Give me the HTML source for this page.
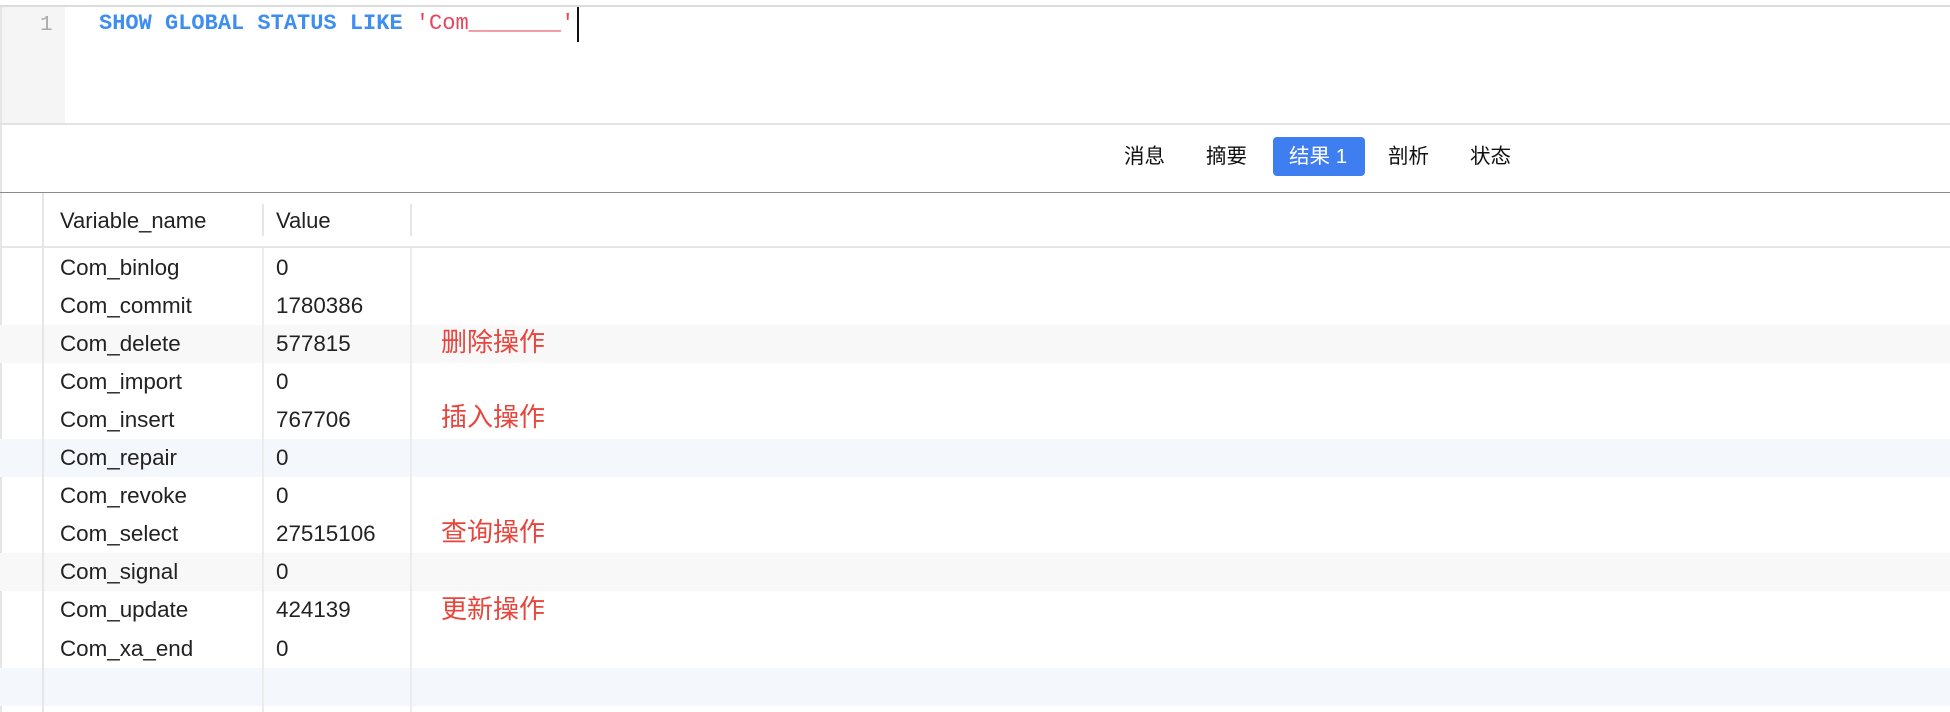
<!DOCTYPE html>
<html><head><meta charset="utf-8"><style>
*{margin:0;padding:0;box-sizing:border-box}
body{width:1950px;height:712px;background:#fff;position:relative;overflow:hidden;font-family:"Liberation Sans","Noto Sans CJK SC",sans-serif;color:#222}
.a{position:absolute}
.row{position:absolute;left:0;width:1950px;height:38px}
.c1,.c2{position:absolute;font-size:22.4px;line-height:38px;top:0;color:#222}
.c1{left:60px}.c2{left:276px}
.note{position:absolute;left:441px;font-size:26px;color:#e8453c;line-height:30px;font-family:"Liberation Sans","Noto Sans CJK SC",sans-serif}
.tab{position:absolute;top:138px;height:38px;line-height:38px;font-size:20.5px;color:#111}
</style></head><body>
<div class="a" style="left:0;top:5px;width:1950px;height:2px;background:#dcdcdc"></div>
<div class="a" style="left:0;top:7px;width:2px;height:705px;background:#e6e6e6"></div>
<div class="a" style="left:2px;top:7px;width:63px;height:117px;background:#f5f5f5"></div>
<div class="a" style="left:40px;top:12px;font-family:'Liberation Mono',monospace;font-size:21px;color:#aaa;line-height:28px">1</div>
<div class="a" style="left:99px;top:10px;font-family:'Liberation Mono',monospace;font-size:22px;font-weight:bold;color:#3d8ef0;line-height:28px;white-space:pre">SHOW GLOBAL STATUS LIKE <span style="color:#e8455a;font-weight:normal">'Com_______'</span></div>
<div class="a" style="left:577px;top:7px;width:2px;height:35px;background:#111"></div>
<div class="a" style="left:0;top:123px;width:1950px;height:2px;background:#e3e3e3"></div>

<div class="tab" style="left:1124px">消息</div>
<div class="tab" style="left:1206px">摘要</div>
<div class="a" style="left:1273px;top:137px;width:92px;height:39px;background:#3f7ef0;border-radius:4px"></div>
<div class="tab" style="left:1289px;color:#fff">结果 1</div>
<div class="tab" style="left:1388px">剖析</div>
<div class="tab" style="left:1470px">状态</div>
<div class="a" style="left:0;top:192px;width:1950px;height:1px;background:#8a8a8a"></div>

<div class="a" style="left:60px;top:206px;font-size:22px;line-height:30px">Variable_name</div>
<div class="a" style="left:276px;top:206px;font-size:22px;line-height:30px">Value</div>
<div class="a" style="left:262px;top:204px;width:2px;height:32px;background:#e6e6e6"></div>
<div class="a" style="left:410px;top:204px;width:2px;height:32px;background:#e6e6e6"></div>
<div class="a" style="left:0;top:246px;width:1950px;height:2px;background:#e6e6e6"></div>

<div class="row" style="top:325px;background:#f8f8f8"></div>
<div class="row" style="top:439px;background:#f4f7fc"></div>
<div class="row" style="top:553px;background:#f8f8f8"></div>
<div class="row" style="top:668px;background:#f4f7fc"></div>

<div class="a" style="left:42px;top:193px;width:2px;height:519px;background:#e6e6e6"></div>
<div class="a" style="left:262px;top:248px;width:2px;height:464px;background:#ececec"></div>
<div class="a" style="left:410px;top:248px;width:2px;height:464px;background:#ececec"></div>

<div class="row" style="top:249px"><span class="c1">Com_binlog</span><span class="c2">0</span></div>
<div class="row" style="top:287px"><span class="c1">Com_commit</span><span class="c2">1780386</span></div>
<div class="row" style="top:325px"><span class="c1">Com_delete</span><span class="c2">577815</span></div>
<div class="row" style="top:363px"><span class="c1">Com_import</span><span class="c2">0</span></div>
<div class="row" style="top:401px"><span class="c1">Com_insert</span><span class="c2">767706</span></div>
<div class="row" style="top:439px"><span class="c1">Com_repair</span><span class="c2">0</span></div>
<div class="row" style="top:477px"><span class="c1">Com_revoke</span><span class="c2">0</span></div>
<div class="row" style="top:515px"><span class="c1">Com_select</span><span class="c2">27515106</span></div>
<div class="row" style="top:553px"><span class="c1">Com_signal</span><span class="c2">0</span></div>
<div class="row" style="top:591px"><span class="c1">Com_update</span><span class="c2">424139</span></div>
<div class="row" style="top:630px"><span class="c1">Com_xa_end</span><span class="c2">0</span></div>

<div class="note" style="top:327px">删除操作</div>
<div class="note" style="top:402px">插入操作</div>
<div class="note" style="top:517px">查询操作</div>
<div class="note" style="top:594px">更新操作</div>
</body></html>
